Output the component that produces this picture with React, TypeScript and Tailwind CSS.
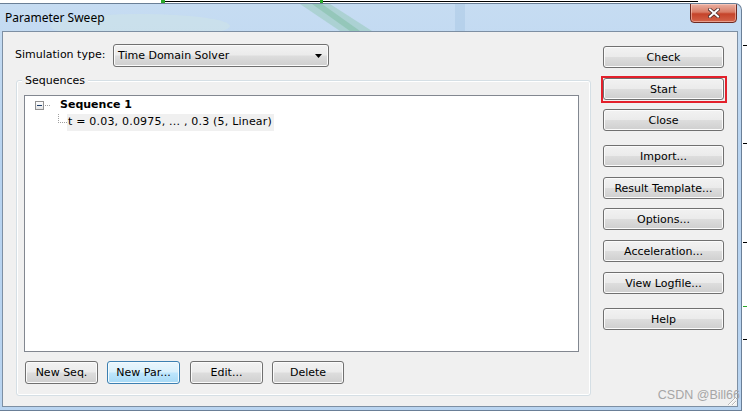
import React from 'react';

const btnBase =
  "flex items-center justify-center rounded-[3px] border text-[11px] leading-none text-black";
const btnNormal =
  "border-[#707070] bg-[linear-gradient(to_bottom,#f2f2f2_0%,#ebebeb_48%,#dddddd_52%,#cfcfcf_100%)] shadow-[inset_0_0_0_1px_#fbfbfb]";
const btnHot =
  "border-[#3c7fb1] bg-[linear-gradient(to_bottom,#eaf6fd_0%,#d9f0fc_48%,#bee6fd_52%,#a7d9f5_100%)] shadow-[inset_0_0_0_1px_#f3fbfe]";

function Btn({ label, className = '', hot = false }: { label: string; className?: string; hot?: boolean }) {
  return <div className={`${btnBase} ${hot ? btnHot : btnNormal} ${className}`}>{label}</div>;
}

export default function App() {
  return (
    <div className="relative w-[747px] h-[415px] bg-white overflow-hidden font-['DejaVu_Sans',sans-serif] text-[11px] text-black">
      {/* desktop marks behind the window */}
      <div className="absolute top-[1px] left-[163px] w-[535px] h-[1px] bg-black" />
      <div className="absolute top-0 left-[161px] w-[4px] h-[3px] bg-[#2aa82a]" />
      <div className="absolute top-0 left-[320px] w-[3px] h-[3px] bg-[#2aa82a]" />
      <div className="absolute top-[45px] left-[743px] w-[4px] h-[1px] bg-black" />
      <div className="absolute top-[143px] left-[743px] w-[4px] h-[1px] bg-black" />
      <div className="absolute top-[242px] left-[743px] w-[4px] h-[1px] bg-black" />
      <div className="absolute top-[306px] left-[743px] w-[4px] h-[1px] bg-[#2aa82a]" />
      <div className="absolute top-[339px] left-[743px] w-[4px] h-[1px] bg-black" />

      {/* window */}
      <div className="relative mt-[3px] w-[742px] h-[408px] flex flex-col rounded-tr-[7px] border-t border-r border-b border-[#6a7f97] bg-[linear-gradient(to_bottom,#c6dcf2,#b7d3f0_40%,#b9d4f0)] overflow-hidden">
        {/* title bar */}
        <div className="relative h-[27px] flex items-center pl-[5px] shrink-0">
          <svg className="absolute left-0 top-0" width="742" height="27" viewBox="0 0 742 27">
            <polygon points="300,0 330,0 372,27 340,27" fill="#7fbf9a" opacity="0.35" />
            <polygon points="312,0 322,0 360,27 350,27" fill="#5fae82" opacity="0.3" />
            <rect x="455" y="0" width="10" height="27" fill="#9fbfe0" opacity="0.35" />
            <ellipse cx="140" cy="22" rx="90" ry="12" fill="#d6ecdf" opacity="0.3" />
          </svg>
          <span className="relative font-['Noto_Sans',sans-serif] text-[12px] text-black">Parameter Sweep</span>
          {/* close button */}
          <div className="absolute right-[4px] -top-[1px] w-[47px] h-[20px] rounded-b-[4px] border border-[#6d2a22] bg-[linear-gradient(to_bottom,#eab0a2_0%,#d97c66_45%,#c5432a_55%,#d3644a_100%)] flex items-center justify-center shadow-[inset_0_0_0_1px_rgba(255,220,210,0.5)]">
            <svg width="12" height="10" viewBox="0 0 12 10">
              <path d="M2 1.5 L10 8.5 M10 1.5 L2 8.5" stroke="#4a2a28" strokeWidth="3.6" strokeLinecap="square" />
              <path d="M2 1.5 L10 8.5 M10 1.5 L2 8.5" stroke="#ffffff" strokeWidth="2" strokeLinecap="square" />
            </svg>
          </div>
        </div>

        {/* frame + client */}
        <div className="flex pl-[2px] pr-[3px] pb-[3px]">
          <div className="relative w-[736px] h-[376px] flex border border-[#7d8fa3] bg-[#f0f0f0]">
            {/* left column */}
            <div className="w-[588px] pl-[12px] pt-[12px] flex flex-col">
              <div className="flex items-center h-[23px]">
                <span className="w-[98px]">Simulation type:</span>
                <div className={`relative w-[216px] h-[23px] ${btnBase} ${btnNormal} !justify-start pl-[4px]`}>
                  <span>Time Domain Solver</span>
                  <svg className="absolute right-[6px] top-[9px]" width="7" height="4" viewBox="0 0 7 4">
                    <polygon points="0,0 7,0 3.5,4" fill="#000" />
                  </svg>
                </div>
              </div>

              {/* group box */}
              <div className="relative mt-[13px] ml-[1px] w-[575px] h-[316px] rounded-[3px] border border-[#d5dfe5] shadow-[inset_0_0_0_1px_#ffffff] pl-[7px] pt-[14px]">
                <span className="absolute left-[5px] -top-[7px] px-[3px] leading-[14px] bg-[#f0f0f0]">Sequences</span>
                <div className="w-[555px] h-[257px] border border-[#828790] bg-white pt-[1px]">
                  {/* tree */}
                  <div className="flex items-center h-[16px] pl-[10px]">
                    <div className="relative w-[9px] h-[9px] border border-[#919191] bg-[linear-gradient(to_bottom,#ffffff,#e4e4e4)] flex items-center justify-center">
                      <div className="w-[5px] h-[1px] bg-[#1e3f6b]" />
                    </div>
                    <div className="ml-[1px] w-[5px] border-t border-dotted border-[#a0a0a0]" />
                    <span className="ml-[10px] font-bold">Sequence 1</span>
                  </div>
                  <div className="flex h-[17px] pl-[33px] mt-[1px]">
                    <div className="w-[9px] h-[9px] border-l border-b border-dotted border-[#a0a0a0]" />
                    <span className="flex items-center pl-[1px] pr-[2px] bg-[#f0f0f0] tracking-[0.2px]">
                      t = 0.03, 0.0975, ... , 0.3 (5, Linear)
                    </span>
                  </div>
                </div>
                <div className="flex mt-[9px] ml-[1px]">
                  <Btn label="New Seq." className="w-[73px] h-[23px]" />
                  <Btn label="New Par..." hot className="ml-[9px] w-[73px] h-[23px]" />
                  <Btn label="Edit..." className="ml-[10px] w-[73px] h-[23px]" />
                  <Btn label="Delete" className="ml-[9px] w-[72px] h-[23px]" />
                </div>
              </div>
            </div>

            {/* right column */}
            <div className="ml-[12px] pt-[14px] w-[121px] flex flex-col">
              <Btn label="Check" className="h-[22px]" />
              <div className="relative mt-[10px]">
                <Btn label="Start" className="h-[22px]" />
                <div className="absolute -left-[2px] -top-[2px] w-[126px] h-[27px] border-2 border-[#e3202b]" />
              </div>
              <Btn label="Close" className="mt-[9px] h-[22px]" />
              <Btn label="Import..." className="mt-[14px] h-[22px]" />
              <Btn label="Result Template..." className="mt-[10px] h-[22px]" />
              <Btn label="Options..." className="mt-[9px] h-[22px]" />
              <Btn label="Acceleration..." className="mt-[10px] h-[22px]" />
              <Btn label="View Logfile..." className="mt-[10px] h-[22px]" />
              <Btn label="Help" className="mt-[14px] h-[22px]" />
            </div>

            {/* watermark + grip */}
            <span className="absolute right-[-3px] bottom-[1px] font-['Liberation_Sans',sans-serif] text-[12.5px] text-[#a6a6a6]">
              CSDN @Bill66
            </span>
            <svg className="absolute right-0 bottom-0" width="12" height="12" viewBox="0 0 12 12">
              <path d="M11 3 L3 11 M11 7 L7 11" stroke="#b8b8b8" strokeWidth="1" />
              <path d="M11 4 L4 11 M11 8 L8 11" stroke="#ffffff" strokeWidth="1" />
            </svg>
          </div>
        </div>
      </div>
    </div>
  );
}
